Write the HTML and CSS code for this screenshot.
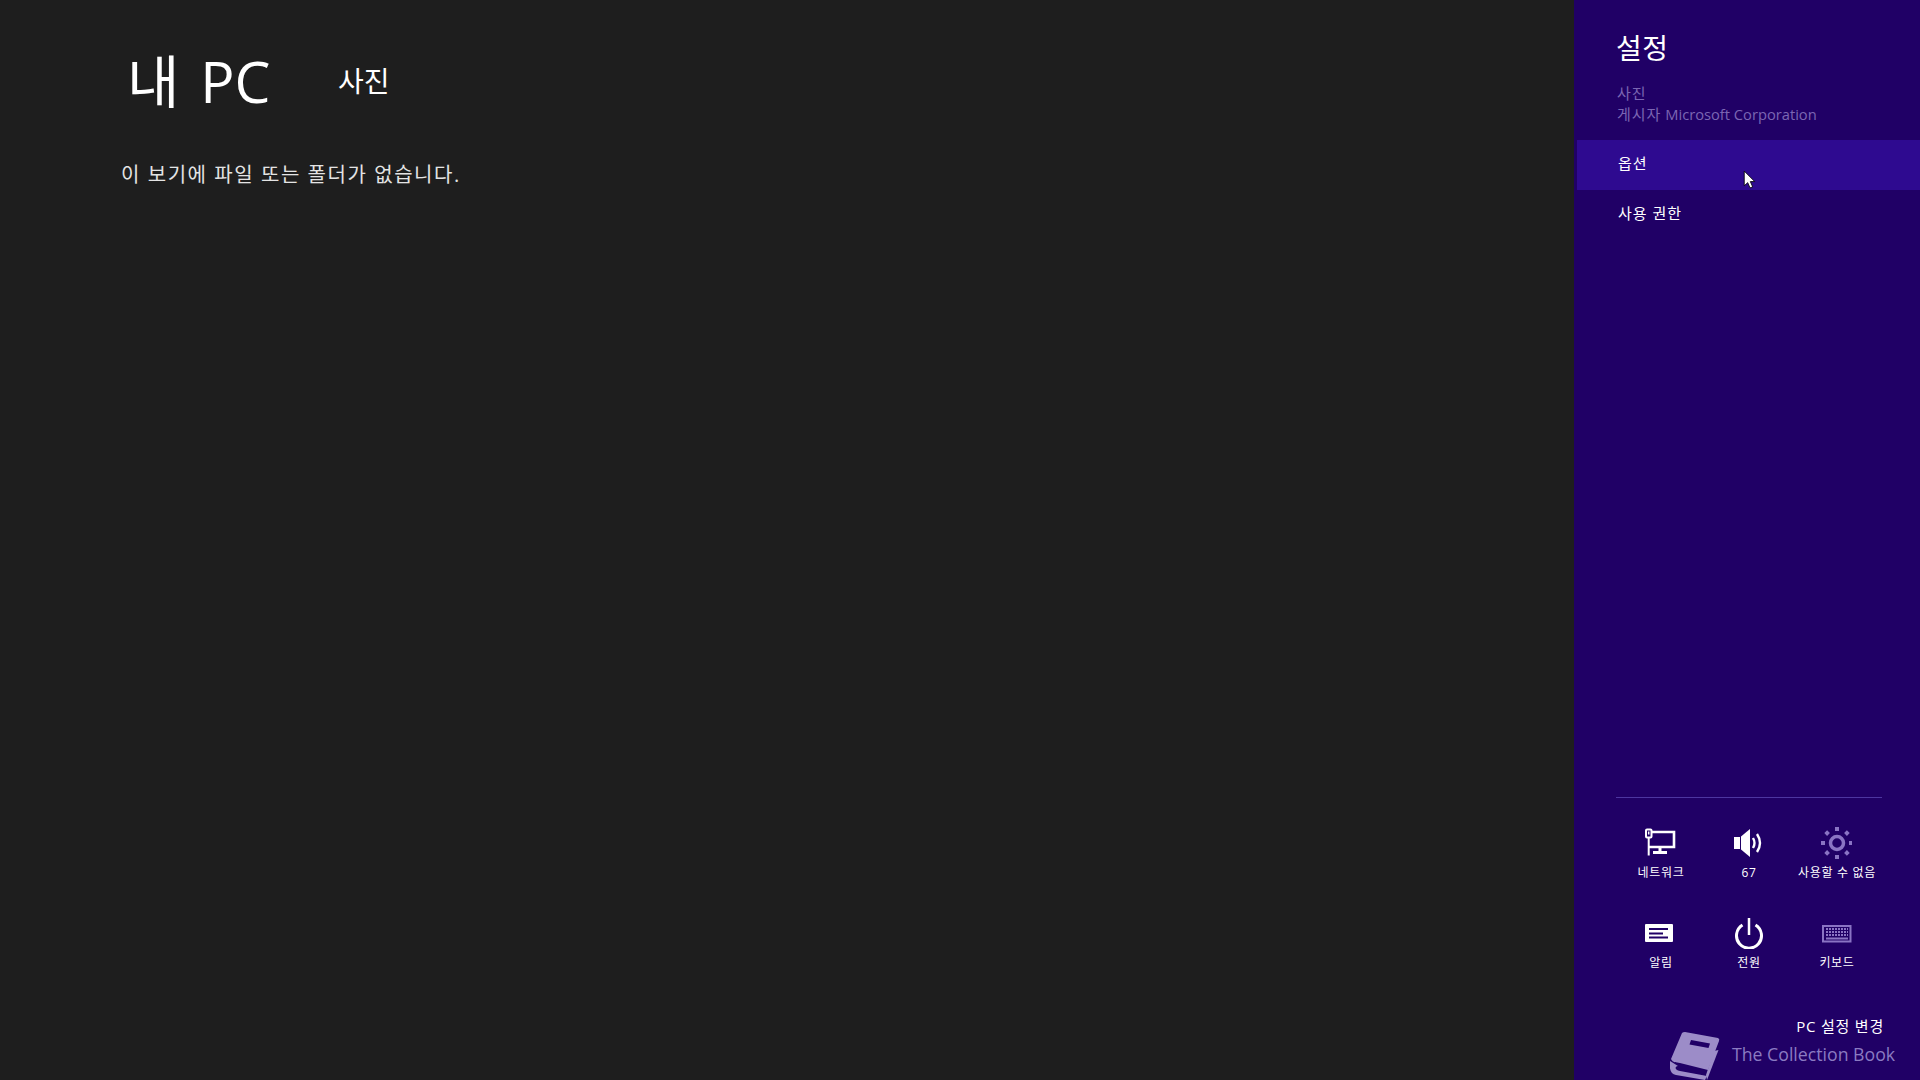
FILE: index.html
```html
<!DOCTYPE html>
<html lang="ko">
<head>
    <meta charset="UTF-8">
    <title>내 PC - 사진</title>
    <link rel="stylesheet" href="styles.css">
</head>
<body>
    <main class="content">
        <header class="page-header">
            <h1 class="page-title">내 PC</h1>
            <span class="page-section">사진</span>
        </header>
        <p class="empty-text">이 보기에 파일 또는 폴더가 없습니다.</p>
    </main>

    <aside class="charm">
        <h2 class="charm-title">설정</h2>
        <div class="app-info">
            <div class="app-name">사진</div>
            <div><span class="app-name">게시자</span> Microsoft Corporation</div>
        </div>
        <ul class="charm-menu">
            <li class="charm-item hover">옵션</li>
            <li class="charm-item">사용 권한</li>
        </ul>

        <div class="charm-bottom">
            <div class="quick-grid">
                <div class="quick-item">
                    <svg class="quick-icon" viewBox="0 0 32 32" fill="none" stroke="#fff" stroke-width="2.600">
                        <rect x="2" y="2.500" width="5.500" height="8" rx="1" stroke-width="2"/>
                        <path d="M4.700 4.500v3" stroke-width="1.500"/>
                        <path d="M4.700 10v18.500" stroke-width="2"/>
                        <path d="M8 5h22v15H4.700"/>
                        <path d="M16 20v5" stroke-width="3"/>
                        <path d="M9 25.500h14" stroke-width="3"/>
                    </svg>
                    <span>네트워크</span>
                </div>
                <div class="quick-item">
                    <svg class="quick-icon" viewBox="0 0 32 32" fill="#fff">
                        <rect x="2" y="10" width="6" height="12"/>
                        <path d="M9 9.500 18 2v28l-9-7.500z"/>
                        <path d="M21 11q3 5 0 10" fill="none" stroke="#fff" stroke-width="2.400"/>
                        <path d="M25 7q6 9 0 18" fill="none" stroke="#fff" stroke-width="2.400"/>
                    </svg>
                    <span>67</span>
                </div>
                <div class="quick-item">
                    <svg class="quick-icon" viewBox="0 0 32 32" fill="none" stroke="#8a74c4" stroke-width="4">
                        <circle cx="17" cy="16" r="6.500" stroke-width="3.500"/>
                        <path d="M17 0v4M17 28v4M1 16h4M29 16h4M5.700 4.700l2.800 2.800M25.500 24.500l2.800 2.800M5.700 27.300l2.800-2.800M25.500 7.500l2.800-2.800"/>
                    </svg>
                    <span>사용할 수 없음</span>
                </div>
                <div class="quick-item">
                    <svg class="quick-icon" viewBox="0 0 32 32">
                        <rect x="1" y="7" width="28" height="18" rx="1" fill="#fff"/>
                        <path d="M5 12h19M5 16.500h14M5 20.500h19" stroke="#200066" stroke-width="2"/>
                    </svg>
                    <span>알림</span>
                </div>
                <div class="quick-item">
                    <svg class="quick-icon" viewBox="0 0 32 32" fill="none" stroke="#fff" stroke-width="3">
                        <path d="M10.500 8a12.500 12.500 0 1 0 13 0"/>
                        <path d="M17 1v17" stroke-width="2.500"/>
                    </svg>
                    <span>전원</span>
                </div>
                <div class="quick-item">
                    <svg class="quick-icon" viewBox="0 0 32 32">
                        <rect x="3" y="9" width="27.500" height="15.500" fill="none" stroke="#8a74c4" stroke-width="2"/>
                        <path d="M6 12h22M6 15h22M6 18h22" stroke="#8a74c4" stroke-width="2" stroke-dasharray="2 1"/>
                        <path d="M6 21.500h22" stroke="#8a74c4" stroke-width="2"/>
                    </svg>
                    <span>키보드</span>
                </div>
            </div>
            <div class="pc-settings">PC 설정 변경</div>
        </div>

        <div class="watermark">
            <svg class="watermark-logo" viewBox="0 0 52 48">
                <path d="M12 1Q13 0 15 0L48 6Q50 7 49 9L38 38 10 31C6 30 3 31 1 27z" fill="#9c8cc8"/>
                <path d="M21 8l19 3.500-1.500 4.500-19-3.500z" fill="#200066"/>
                <path d="M0 29C-1 38 1 42 6 43l29 5 2-4-27-5C5 38 4 35 8 34z" fill="#9c8cc8"/>
                <path d="M44 19l4.500-1L37 48l-1-5z" fill="#9c8cc8"/>
            </svg>
            <span class="watermark-text">The Collection Book</span>
        </div>
    </aside>

    <svg class="cursor" viewBox="0 0 12 19">
        <path d="M1 1v14l3.300-3 2.200 5 2.500-1-2.200-5H11z" fill="#fff" stroke="#000" stroke-width=".8"/>
    </svg>
</body>
</html>
```

FILE: styles.css
```css
* {
    box-sizing: border-box;
    margin: 0;
    padding: 0;
}

body {
    width: 1920px;
    height: 1080px;
    overflow: hidden;
    display: flex;
    position: relative;
    background: #1e1e1e;
    color: #fff;
    font-family: "Open Sans", "Noto Sans CJK KR", sans-serif;
}

.content {
    flex: 1;
    padding: 44px 0 0 121px;
}

.page-header {
    display: flex;
    align-items: center;
    padding-left: 6px;
}

.page-title {
    font-size: 57px;
    font-weight: 400;
    line-height: 74px;
    width: 211px;
    word-spacing: 6px;
}

.page-section {
    font-size: 28px;
    padding-bottom: 2px;
}

.empty-text {
    margin-top: 42px;
    font-size: 20px;
    line-height: 30px;
    letter-spacing: 1.550px;
    color: #e4e4e4;
}

.charm {
    width: 346px;
    padding-top: 28px;
    display: flex;
    flex-direction: column;
    position: relative;
    background: #200066;
}

.charm-title {
    margin-left: 42px;
    font-size: 28px;
    font-weight: 400;
    line-height: 40px;
    letter-spacing: .5px;
}

.app-info {
    margin: 15px 0 0 43px;
    font-size: 14.700px;
    line-height: 21px;
    color: #7b66b3;
}

.app-name {
    font-size: 15px;
    letter-spacing: 1px;
}

.charm-menu {
    list-style: none;
    margin: 15px 0 0 3px;
}

.charm-item {
    height: 50px;
    padding-left: 41px;
    font-size: 15px;
    line-height: 47px;
    letter-spacing: 1px;
}

.charm-item.hover {
    background: #2e0a90;
}

.charm-bottom {
    margin: auto 0 0 42px;
    width: 266px;
    border-top: 1px solid #4d36a0;
    padding-top: 29px;
    height: 283px;
}

.quick-grid {
    display: grid;
    grid-template-columns: repeat(3, 88px);
    grid-auto-rows: 90px;
}

.quick-item {
    display: flex;
    flex-direction: column;
    align-items: center;
    gap: 5px;
    font-size: 12px;
    line-height: 18px;
    letter-spacing: .7px;
}

.quick-item span {
    padding-left: 2px;
}

.quick-icon {
    width: 32px;
    height: 32px;
}

.pc-settings {
    margin: 8px -2px 0 0;
    text-align: right;
    font-size: 15px;
    line-height: 22px;
    letter-spacing: .8px;
}

.watermark {
    position: absolute;
    left: 96px;
    bottom: 0;
    display: flex;
    align-items: center;
    gap: 10px;
    font-size: 17.700px;
    color: #8b7bc2;
}

.watermark-text {
    padding-bottom: 4px;
}

.watermark-logo {
    width: 52px;
    height: 48px;
}

.cursor {
    position: absolute;
    left: 1743px;
    top: 170px;
    width: 13px;
    height: 20px;
}
```
